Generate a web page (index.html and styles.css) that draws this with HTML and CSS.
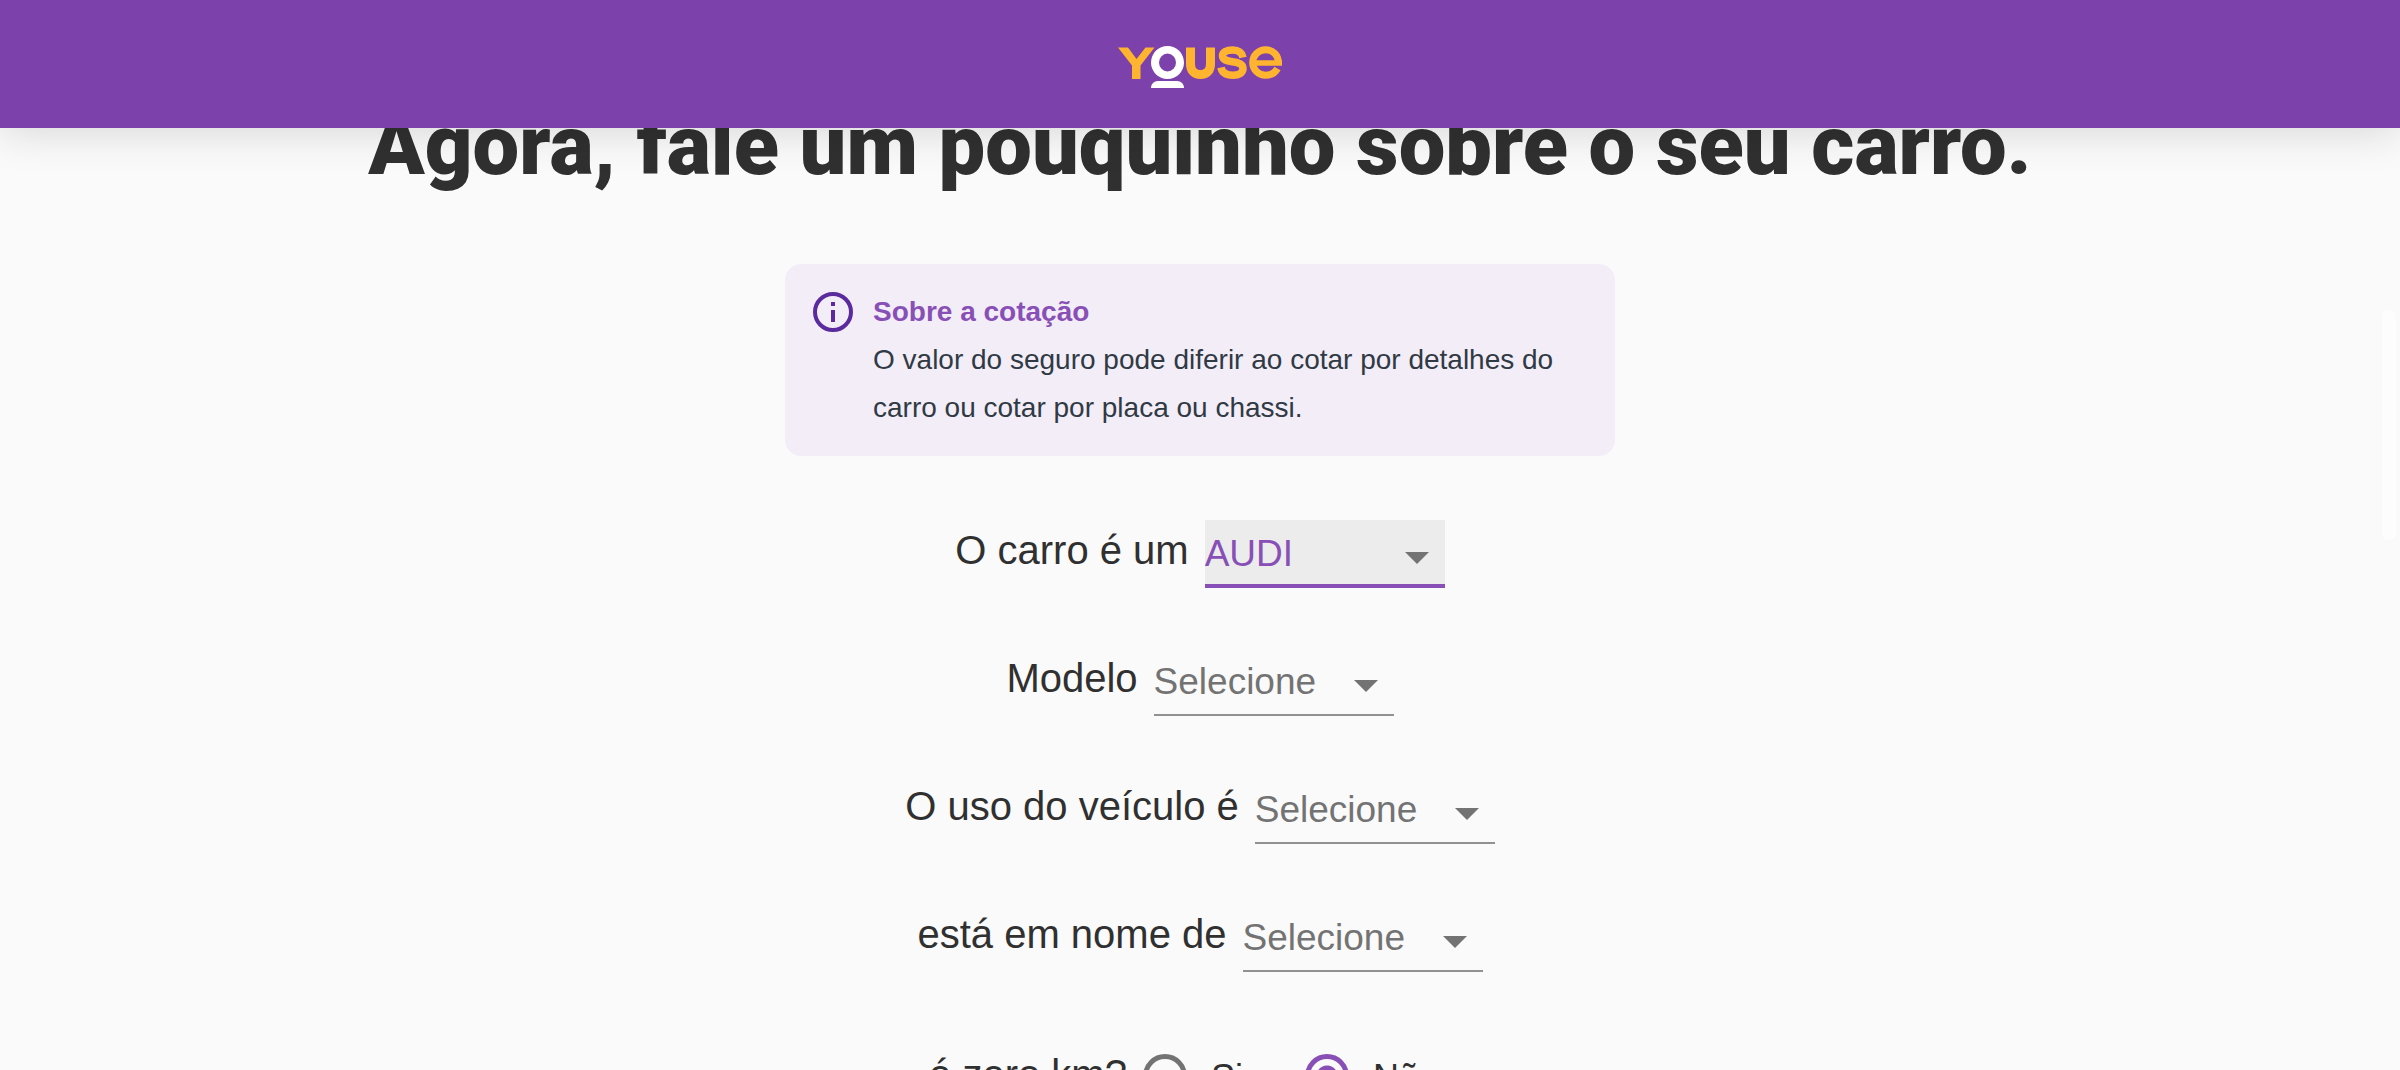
FILE: index.html
```html
<!DOCTYPE html>
<html lang="pt-BR">
<head>
<meta charset="utf-8">
<meta name="viewport" content="width=device-width, initial-scale=1">
<title>Youse - Seguro Auto</title>
<link rel="stylesheet" href="styles.css">
</head>
<body>
<header class="topbar">
  <a class="brand" href="#" aria-label="Youse">
    <svg class="logo" viewBox="0 0 164 43" aria-hidden="true">
      <path fill="#ffb430" d="M0 1.500h10l8.500 11.500L27.500 1.500h9L22.500 19.500V33h-8.500V19.500z"/>
      <g fill="none" stroke="#ffb430" stroke-width="9">
        <path d="M72.500 1.500V18C72.500 25 76.500 28.500 82.500 28.500S92.500 25 92.500 18V1.500"/>
        <path stroke-width="7.500" d="M125 11.500C124 6.500 120 4 114.500 4C108.500 4 104.500 6.300 104.500 9.800C104.500 14 109 14.800 114.500 15.800C121.500 16.800 125 18.300 125 22.500C125 27 121 29.200 115 29.200C108.500 29.200 104 26.500 103 21.500"/>
        <path stroke-width="7" d="M160.500 18C160.500 9 155 3.700 147.500 3.700A12.800 12.800 0 0 0 147.500 29.300C152.500 29.300 157 27 159.500 22.500"/>
        <path stroke-width="5.500" d="M137 17H164"/>
      </g>
      <path fill="#fff" fill-rule="evenodd" d="M49.500 0a16.500 16.500 0 1 0 0 33a16.500 16.500 0 1 0 0-33zM49.500 7.500a8.500 9 0 1 1 0 18a8.500 9 0 1 1 0-18z"/>
      <path fill="#fff" d="M33 42c0-4 3-7 7-7h19c4 0 7 3 7 7z"/>
    </svg>
  </a>
</header>
<main class="content">
  <h1 class="title">Agora, fale um pouquinho sobre o seu carro.</h1>
  <section class="notice">
    <svg class="notice-icon" viewBox="0 0 40 40" aria-hidden="true">
      <circle cx="20" cy="20" r="18" fill="none" stroke="#5b2a9d" stroke-width="4"/>
      <path fill="#5b2a9d" d="M18 10h4v4h-4zM18 18h4v12h-4z"/>
    </svg>
    <div class="notice-text">
      <h2 class="notice-title">Sobre a cotação</h2>
      <p class="notice-body">O valor do seguro pode diferir ao cotar por detalhes do carro ou cotar por placa ou chassi.</p>
    </div>
  </section>
  <form class="form">
    <div class="row">
      <label class="label" for="marca">O carro é um</label>
      <span class="picker"><select class="select select-active" id="marca"><option>AUDI</option></select><svg class="caret" viewBox="0 0 24 12" aria-hidden="true"><path d="M0 0h24L12 12z"/></svg></span>
    </div>
    <div class="row">
      <label class="label" for="modelo">Modelo</label>
      <span class="picker"><select class="select" id="modelo"><option>Selecione</option></select><svg class="caret" viewBox="0 0 24 12" aria-hidden="true"><path d="M0 0h24L12 12z"/></svg></span>
    </div>
    <div class="row">
      <label class="label" for="uso">O uso do veículo é</label>
      <span class="picker"><select class="select" id="uso"><option>Selecione</option></select><svg class="caret" viewBox="0 0 24 12" aria-hidden="true"><path d="M0 0h24L12 12z"/></svg></span>
    </div>
    <div class="row">
      <label class="label" for="nome">está em nome de</label>
      <span class="picker"><select class="select" id="nome"><option>Selecione</option></select><svg class="caret" viewBox="0 0 24 12" aria-hidden="true"><path d="M0 0h24L12 12z"/></svg></span>
    </div>
    <fieldset class="radios">
      <legend class="visually-hidden">Zero km</legend>
      <span class="label">é zero km?</span>
      <label class="option"><input class="radio" type="radio" name="zero"><span class="option-text">Sim</span></label>
      <label class="option"><input class="radio" type="radio" name="zero" checked><span class="option-text">Não</span></label>
    </fieldset>
  </form>
</main>
<div class="scroll-thumb"></div>
</body>
</html>
```
FILE: styles.css
```css
* { box-sizing: border-box; }
html, body { height: 100%; }
body {
  margin: 0;
  overflow: hidden;
  background: #fafafa;
  color: #303030;
  font-family: "Liberation Sans", Arial, sans-serif;
}
.topbar {
  position: relative;
  z-index: 2;
  display: flex;
  justify-content: center;
  height: 128px;
  padding-top: 46px;
  background: #7d41ab;
  box-shadow: 0 4px 40px rgba(0, 0, 0, 0.14);
}
.brand { display: block; height: 44px; }
.logo { display: block; width: 164px; height: 43px; overflow: visible; }
.content {
  display: flex;
  flex-direction: column;
  align-items: center;
}
.title {
  margin: -32px 0 68px;
  font-family: Roboto, sans-serif;
  font-size: 83px;
  font-weight: 900;
  line-height: 100px;
  white-space: nowrap;
}
.notice {
  display: flex;
  gap: 20px;
  width: 830px;
  max-width: 100%;
  padding: 24px 28px;
  border-radius: 16px;
  background: #f3edf8;
}
.notice-icon { flex: none; width: 40px; height: 40px; margin-top: 4px; }
.notice-title, .notice-body { margin: 0; font-size: 28px; line-height: 48px; }
.notice-title { color: #8850b6; }
.notice-body { color: #303a44; }
.form { padding-top: 64px; }
.row {
  display: flex;
  justify-content: center;
  gap: 16px;
  height: 68px;
  margin-bottom: 60px;
}
.label { font-size: 40px; line-height: 60px; }
.picker { position: relative; width: 240px; }
.select {
  appearance: none;
  display: block;
  width: 100%;
  height: 68px;
  margin: 0;
  padding: 2px 48px 0 0;
  border: 0;
  border-bottom: 2px solid #919191;
  border-radius: 0;
  outline: 0;
  background: transparent;
  color: #737373;
  font: 37px/40px "Liberation Sans", Arial, sans-serif;
}
.select-active {
  padding-top: 4px;
  border-bottom: 4px solid #8850b6;
  background: #ececec;
  color: #8850b6;
}
.caret {
  position: absolute;
  top: 32px;
  right: 16px;
  width: 24px;
  height: 12px;
  fill: #737373;
  pointer-events: none;
}
.radios {
  display: flex;
  justify-content: center;
  align-items: center;
  gap: 16px;
  margin: 0;
  padding: 12px 16px 0 0;
  border: 0;
}
.option {
  display: flex;
  align-items: center;
  gap: 24px;
  margin-right: 16px;
  padding-top: 4px;
}
.option-text {
  padding-top: 4px;
  font-size: 36px;
  line-height: 40px;
}
.radio {
  appearance: none;
  width: 44px;
  height: 44px;
  margin: 0;
  border: 5px solid #737373;
  border-radius: 50%;
}
.radio:checked {
  border-color: #8850b6;
  background: radial-gradient(circle, #8850b6 10px, transparent 11px);
}
.visually-hidden {
  position: absolute;
  width: 1px;
  height: 1px;
  overflow: hidden;
  clip-path: inset(50%);
}
.scroll-thumb {
  position: fixed;
  top: 310px;
  right: 4px;
  width: 14px;
  height: 230px;
  border-radius: 7px;
  background: #fdfdfd;
}
```
